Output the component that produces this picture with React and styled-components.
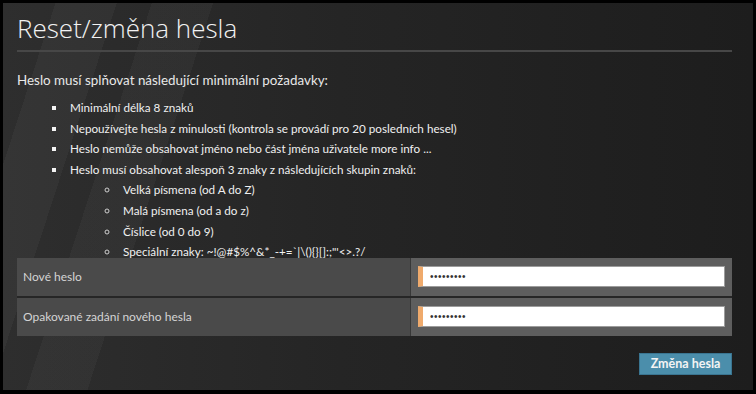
import styled, { createGlobalStyle } from "styled-components";

const GlobalStyle = createGlobalStyle`
	html, body {
		margin: 0;
		padding: 0;
		background: #000;
	}
	body {
		font-family: "Lato", "Open Sans", "Liberation Sans", sans-serif;
	}
`;

const rules = [
	"Minimální délka 8 znaků",
	"Nepoužívejte hesla z minulosti (kontrola se provádí pro 20 posledních hesel)",
	"Heslo nemůže obsahovat jméno nebo část jména uživatele more info ...",
];

const groups = [
	"Velká písmena (od A do Z)",
	"Malá písmena (od a do z)",
	"Číslice (od 0 do 9)",
	"Speciální znaky: ~!@#$%^&*_-+=`|\\(){}[]:;\"'<>.?/",
];

export default function App() {
	return (
		<>
			<GlobalStyle />
			<Frame>
				<Panel>
					<Title>Reset/změna hesla</Title>
					<Intro>Heslo musí splňovat následující minimální požadavky:</Intro>
					<RuleList>
						{rules.map((r) => (
							<Rule key={r}>{r}</Rule>
						))}
						<Rule>
							Heslo musí obsahovat alespoň 3 znaky z následujících skupin znaků:
							<GroupList>
								{groups.map((g) => (
									<Group key={g}>{g}</Group>
								))}
							</GroupList>
						</Rule>
					</RuleList>
					<Form>
						<Label>Nové heslo</Label>
						<Field>
							<Input type="password" defaultValue="123456789" readOnly />
						</Field>
						<Label>Opakované zadání nového hesla</Label>
						<Field>
							<Input type="password" defaultValue="123456789" readOnly />
						</Field>
					</Form>
					<Actions>
						<Button>Změna hesla</Button>
					</Actions>
				</Panel>
			</Frame>
		</>
	);
}

const Frame = styled.div`
	width: 756px;
	height: 394px;
	box-sizing: border-box;
	padding: 3px 3px 4px 3px;
	background: #000;
`;

const Panel = styled.div`
	height: 100%;
	box-sizing: border-box;
	padding: 6px 21px 0 14px;
	color: #e4e4e4;
	background:
		linear-gradient(108deg, transparent 0 6%, rgba(255, 255, 255, 0.035) 6% 13%, transparent 13% 17%, rgba(255, 255, 255, 0.03) 17% 24%, transparent 24% 100%),
		linear-gradient(90deg, #2e2e2e 0%, #252525 45%, #1d1d1d 100%);
`;

const Title = styled.h1`
	margin: 0;
	padding: 0 0 2px 0;
	font-family: "Open Sans", "Liberation Sans", sans-serif;
	font-weight: 300;
	font-size: 26px;
	line-height: 39px;
	color: #f2f2f2;
	border-bottom: 2px solid #474747;
`;

const Intro = styled.p`
	margin: 18px 0 0 0;
	font-size: 13.4px;
	line-height: 20px;
	color: #e8e8e8;
`;

const RuleList = styled.ul`
	margin: 7px 0 -4px 0;
	padding: 0 0 0 50px;
	list-style: square;
	font-size: 11.7px;
	line-height: 20.6px;
	color: #f0f0f0;
`;

const Rule = styled.li`
	padding-left: 3px;
	&::marker {
		color: #f4f4f4;
	}
`;

const GroupList = styled.ul`
	margin: 0;
	padding: 0 0 0 50px;
	list-style: circle;
`;

const Group = styled.li`
	padding-left: 3px;
	&::marker {
		color: #cfcfcf;
	}
`;

const Form = styled.div`
	display: grid;
	grid-template-columns: 393px 1fr;
	grid-auto-rows: 38px;
	row-gap: 2px;
	background: #262626;
`;

const Label = styled.div`
	display: flex;
	align-items: center;
	padding-left: 6px;
	background: #4a4a4a;
	font-size: 12px;
	color: #d4d4d4;
`;

const Field = styled.div`
	display: flex;
	align-items: center;
	padding: 0 7px 0 7px;
	background: #5e5e5e;
	border-left: 1px solid #383838;
`;

const Input = styled.input`
	flex: 1;
	height: 21px;
	box-sizing: border-box;
	margin: 0;
	padding: 0 0 0 7px;
	border: 1px solid #9c9c9c;
	border-left: 5px solid #efaa6c;
	background: #fff;
	color: #333;
	font-size: 10px;
	letter-spacing: 0.5px;
	outline: none;
`;

const Actions = styled.div`
	display: flex;
	justify-content: flex-end;
	margin-top: 17px;
`;

const Button = styled.button`
	width: 93px;
	height: 22px;
	padding: 0;
	background: #4b8eab;
	border: 1px solid #3a7591;
	color: #f4f4f4;
	font-family: "Lato", sans-serif;
	font-weight: 700;
	font-size: 12.5px;
`;
